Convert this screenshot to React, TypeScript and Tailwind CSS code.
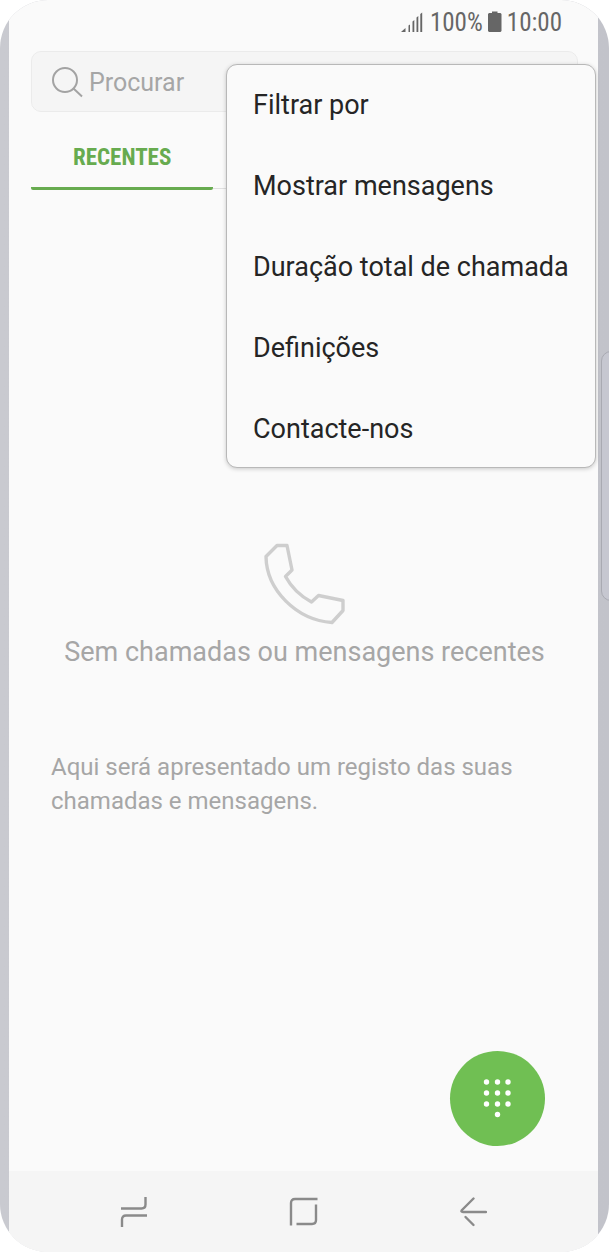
import { useState } from 'react';

const menuItems = [
  'Filtrar por',
  'Mostrar mensagens',
  'Duração total de chamada',
  'Definições',
  'Contacte-nos',
];

const keypadDots = [
  [4.5, 5], [15.5, 5], [26, 5],
  [4.5, 16], [15.5, 16], [26, 16],
  [4.5, 27], [15.5, 27], [26, 27],
  [15.5, 37.5],
];

function StatusBar() {
  return (
    <header className="flex h-11 items-center justify-end gap-1 pr-9 font-['Roboto_Condensed',Roboto,sans-serif] text-[25px] leading-7 text-[#666]">
      <svg className="mr-0.5" width="24" height="22" viewBox="0 0 24 22" fill="currentColor" aria-hidden="true">
        <path d="M1 21 5.500 17V21Z" />
        <path d="M8.500 14.500 10 13.500V21H8.500Z" />
        <path d="M12.500 10.500 14.300 9V21H12.500Z" />
        <path d="M16.500 6.500 18.300 5V21H16.500Z" />
        <path d="M20.300 3 22.200 1.500V21H20.300Z" />
      </svg>
      <span className="pt-0.5">100%</span>
      <svg width="16" height="22" viewBox="0 0 16 22" fill="currentColor" aria-hidden="true">
        <path d="M5 0.500H10.500V2H13.500L14.500 3V20L13.500 21H2L1 20V3L2 2H5Z" />
      </svg>
      <span className="pt-0.5">10:00</span>
    </header>
  );
}

function SearchBox() {
  const [query, setQuery] = useState('');
  return (
    <label className="mt-[7px] flex h-[61px] items-center gap-[3px] rounded-[10px] border border-[#ebebeb] bg-[#f5f5f5] px-5 text-[#a3a3a3]">
      <svg width="34" height="34" viewBox="0 0 34 34" fill="none" stroke="currentColor" strokeWidth="2" aria-hidden="true">
        <circle cx="13" cy="15" r="12" />
        <path d="M21.500 23.500 30 31.500" />
      </svg>
      <input
        type="text"
        aria-label="Procurar"
        placeholder="Procurar"
        value={query}
        onChange={(e) => setQuery(e.target.value)}
        className="min-w-0 flex-1 bg-transparent pt-0.5 text-[25px] leading-8 text-[#252525] outline-none placeholder:text-[#a6a6a6]"
      />
    </label>
  );
}

function Tabs() {
  return (
    <div role="tablist" className="flex h-[78px] items-end">
      <button
        type="button"
        role="tab"
        aria-selected="true"
        className="h-full w-1/3 rounded-b-[2px] border-b-3 border-[#67ab4f] pt-4 font-['Roboto_Condensed',Roboto,sans-serif] text-[23px] leading-7 font-bold text-[#67ab4f]"
      >
        RECENTES
      </button>
      <div className="mb-px flex-1 border-b border-[#e0e0e0]" />
    </div>
  );
}

function EmptyState() {
  return (
    <section className="mt-[352px] flex flex-col text-[#a6a6a6]">
      <svg className="self-center text-[#cecece]" width="84" height="84" viewBox="0 0 84 84" fill="none" stroke="currentColor" strokeWidth="3.400" strokeLinejoin="round" aria-hidden="true">
        <path d="M14 3.500H24L29 28L22.500 34.500Q31.500 51 48.500 60L55.500 53.500L80 58.500V68.500L69 80.500C33.500 78 3.500 48 3 14.500Z" />
      </svg>
      <h1 className="mt-2 text-center text-[27px] leading-9">Sem chamadas ou mensagens recentes</h1>
      <p className="mt-20 max-w-[510px] px-5 text-2xl leading-[34px]">
        Aqui será apresentado um registo das suas chamadas e mensagens.
      </p>
    </section>
  );
}

function OptionsMenu() {
  return (
    <ul role="menu" className="absolute top-16 right-0.5 flex w-[370px] flex-col gap-[45px] rounded-[11px] border border-[#b8b8b8] bg-[#fafafa] pt-[22px] pb-5 shadow-[0_1px_4px_rgba(0,0,0,0.2)]">
      {menuItems.map((item) => (
        <li key={item} role="none" className="flex">
          <button type="button" role="menuitem" className="w-full px-[26px] text-left text-[27px] leading-9 whitespace-nowrap text-[#252525]">
            {item}
          </button>
        </li>
      ))}
    </ul>
  );
}

function NavBar() {
  return (
    <nav className="grid h-[81px] grid-cols-3 bg-[#f5f5f5] pr-10 pl-[41px] text-[#8a8a8a]">
      <button type="button" aria-label="Recentes" className="flex items-center justify-center">
        <svg width="30" height="32" viewBox="0 0 30 32" fill="none" stroke="currentColor" strokeWidth="2.400">
          <path d="M1 12.500H21.500Q25.500 12.500 25.500 8.500V1" />
          <path d="M27 19.500H6Q2 19.500 2 23.500V31" />
        </svg>
      </button>
      <button type="button" aria-label="Início" className="flex items-center justify-center">
        <svg width="30" height="30" viewBox="0 0 30 30" fill="none" stroke="currentColor" strokeWidth="2.400">
          <path d="M28.500 2H6Q2 2 2 6V28.500" />
          <path d="M27 7.500V23Q27 27 23 27H7.500" />
        </svg>
      </button>
      <button type="button" aria-label="Voltar" className="flex items-center justify-center">
        <svg width="28" height="30" viewBox="0 0 28 30" fill="none" stroke="currentColor" strokeWidth="2.400" strokeLinecap="round" strokeLinejoin="round">
          <path d="M14.500 1.500 3 13Q1.500 15 4 15H27" />
          <path d="M6.500 20 14.500 28" />
        </svg>
      </button>
    </nav>
  );
}

export default function App() {
  return (
    <div className="relative flex min-h-screen overflow-hidden rounded-[48px] bg-linear-to-r from-[#c9cad0] to-[#c2c3ca] pr-[11px] pl-[9px] font-[Roboto,sans-serif]">
      <div className="absolute top-[351px] -right-3 h-[250px] w-5 rounded-[10px] border border-[#a9aab2] bg-[#c6c7d0]" />
      <div className="relative flex min-w-0 flex-1 flex-col bg-[#fafafa]">
        <StatusBar />
        <main className="flex flex-1 flex-col pr-5 pl-[22px]">
          <SearchBox />
          <Tabs />
          <EmptyState />
          <button
            type="button"
            aria-label="Teclado"
            className="mt-auto mr-[33px] mb-[25px] flex size-[95px] items-center justify-center self-end rounded-full bg-[#70bf53]"
          >
            <svg width="32" height="43" viewBox="0 0 32 43" fill="#fff">
              {keypadDots.map(([cx, cy]) => (
                <circle key={`${cx}-${cy}`} cx={cx} cy={cy} r="2.700" />
              ))}
            </svg>
          </button>
        </main>
        <NavBar />
        <OptionsMenu />
      </div>
    </div>
  );
}
